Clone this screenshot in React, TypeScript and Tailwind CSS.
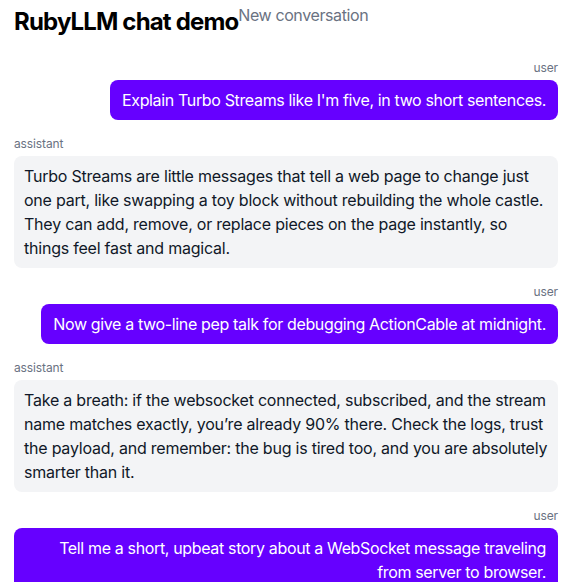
type Message = {
  role: "user" | "assistant";
  content: string;
};

const messages: Message[] = [
  { role: "user", content: "Explain Turbo Streams like I'm five, in two short sentences." },
  {
    role: "assistant",
    content:
      "Turbo Streams are little messages that tell a web page to change just one part, like swapping a toy block without rebuilding the whole castle. They can add, remove, or replace pieces on the page instantly, so things feel fast and magical.",
  },
  { role: "user", content: "Now give a two-line pep talk for debugging ActionCable at midnight." },
  {
    role: "assistant",
    content:
      "Take a breath: if the websocket connected, subscribed, and the stream name matches exactly, you\u2019re already 90% there. Check the logs, trust the payload, and remember: the bug is tired too, and you are absolutely smarter than it.",
  },
  {
    role: "user",
    content: "Tell me a short, upbeat story about a WebSocket message traveling from server to browser.",
  },
];

function ChatMessage({ message }: { message: Message }) {
  const isUser = message.role === "user";
  return (
    <div className={isUser ? "mb-4 text-right" : "mb-4 text-left"}>
      <div className="mb-1 text-xs leading-4 tracking-[-0.01em] text-gray-500">{message.role}</div>
      <div
        className={
          isUser
            ? "inline-block max-w-full rounded-lg bg-[#6600ff] px-3 py-2 text-base leading-6 tracking-[-0.022em] text-white"
            : "inline-block max-w-full rounded-lg bg-gray-100 px-[10px] py-2 text-base leading-6 tracking-[-0.014em] text-gray-900"
        }
      >
        {message.content}
      </div>
    </div>
  );
}

export default function App() {
  return (
    <div
      className="min-h-screen bg-white px-[14px] pt-[3px] text-black"
      style={{ fontFamily: "Inter, 'Noto Sans', sans-serif" }}
    >
      <header className="mb-[22px] flex items-start">
        <h1 className="pt-[3px] text-2xl leading-8 font-bold tracking-[-0.035em]">RubyLLM chat demo</h1>
        <a href="#" className="text-base leading-6 tracking-[-0.025em] text-gray-500">
          New conversation
        </a>
      </header>

      <div id="messages">
        {messages.map((m, i) => (
          <ChatMessage key={i} message={m} />
        ))}
      </div>
    </div>
  );
}
